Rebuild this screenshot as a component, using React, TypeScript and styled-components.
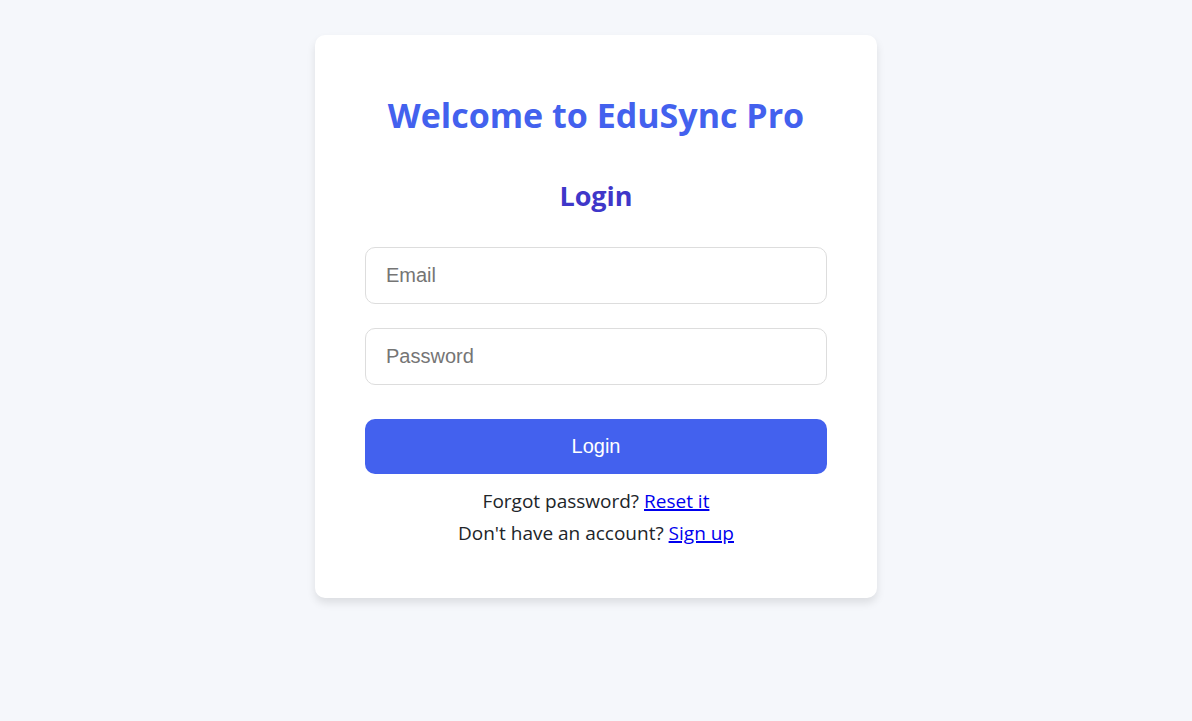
import React from "react";
import styled, { createGlobalStyle } from "styled-components";

const GlobalStyle = createGlobalStyle`
  * { box-sizing: border-box; }
  body {
    margin: 0;
    background: #f5f7fb;
    color: #212529;
    font-family: "Segoe UI", "Open Sans", "Noto Sans", sans-serif;
    font-size: 19px;
    line-height: 32px;
  }
`;

const Page = styled.main`
  padding: 35px 20px;
`;

const Card = styled.section`
  max-width: 562px;
  margin: 0 auto;
  padding: 50px 50px 49px;
  background: #fff;
  border-radius: 10px;
  box-shadow: 0 5px 8px rgba(0, 0, 0, 0.1);
  text-align: center;
`;

const Title = styled.h1`
  margin: 0 0 26px;
  color: #4361ee;
  font-size: 34px;
  font-weight: 700;
  line-height: 60px;
`;

const Subtitle = styled.h2`
  margin: 0 0 26px;
  color: #3f37c9;
  font-size: 27px;
  font-weight: 700;
  line-height: 50px;
`;

const Form = styled.form`
  display: flex;
  flex-direction: column;
  margin: 0 0 11px;
`;

const Field = styled.input`
  width: 100%;
  height: 57px;
  margin: 0 0 24px;
  padding: 0 20px;
  border: 1px solid #ddd;
  border-radius: 10px;
  background: #fff;
  font-family: "Liberation Sans", Arial, sans-serif;
  font-size: 20px;
  &::placeholder { color: #757575; }
`;

const Submit = styled.button`
  height: 55px;
  margin: 10px 0 0;
  border: 0;
  border-radius: 10px;
  background: #4361ee;
  color: #fff;
  font-family: "Liberation Sans", Arial, sans-serif;
  font-size: 20px;
  cursor: pointer;
`;

const Note = styled.p`
  margin: 0;
`;

const Link = styled.a`
  color: #0000ee;
  text-decoration: underline;
  text-decoration-thickness: 2px;
`;

export default function App() {
  return (
    <>
      <GlobalStyle />
      <Page>
        <Card>
          <Title>Welcome to EduSync Pro</Title>
          <Subtitle>Login</Subtitle>
          <Form onSubmit={(e) => e.preventDefault()}>
            <Field type="email" placeholder="Email" aria-label="Email" />
            <Field type="password" placeholder="Password" aria-label="Password" />
            <Submit type="submit">Login</Submit>
          </Form>
          <Note>
            Forgot password? <Link href="#reset">Reset it</Link>
          </Note>
          <Note>
            Don't have an account? <Link href="#signup">Sign up</Link>
          </Note>
        </Card>
      </Page>
    </>
  );
}
